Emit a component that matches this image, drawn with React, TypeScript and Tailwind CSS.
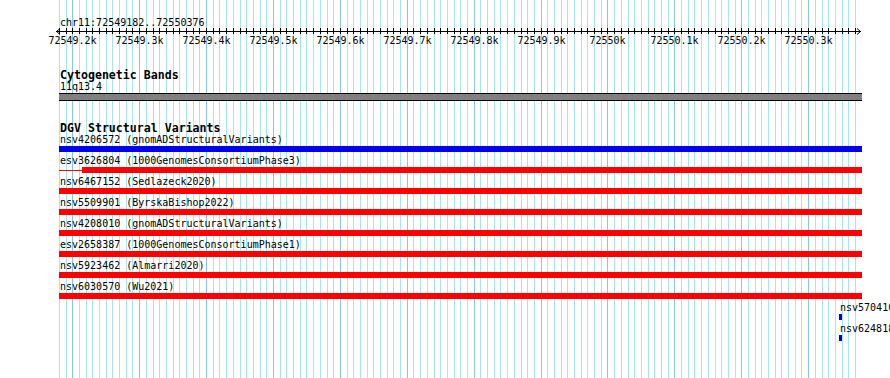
import React from "react";

const PX_PER_10BP = 6.69;
const GRID_LEFT = 58.9;
const GRID_COUNT = 120;

const majorLabels = [
  "72549.2k",
  "72549.3k",
  "72549.4k",
  "72549.5k",
  "72549.6k",
  "72549.7k",
  "72549.8k",
  "72549.9k",
  "72550k",
  "72550.1k",
  "72550.2k",
  "72550.3k",
];

const variants = [
  { label: "nsv4206572 (gnomADStructuralVariants)", bar: "bg-[#0000ee]" },
  { label: "esv3626804 (1000GenomesConsortiumPhase3)", bar: "bg-[#ff0000]", startsAt: 23 },
  { label: "nsv6467152 (Sedlazeck2020)", bar: "bg-[#ff0000]" },
  { label: "nsv5509901 (ByrskaBishop2022)", bar: "bg-[#ff0000]" },
  { label: "nsv4208010 (gnomADStructuralVariants)", bar: "bg-[#ff0000]" },
  { label: "esv2658387 (1000GenomesConsortiumPhase1)", bar: "bg-[#ff0000]" },
  { label: "nsv5923462 (Almarri2020)", bar: "bg-[#ff0000]" },
  { label: "nsv6030570 (Wu2021)", bar: "bg-[#ff0000]" },
];

// these two sit at the right edge of the view and run off it
const tinyVariants = [
  "nsv5704100 (gnomADStructuralVariants)",
  "nsv6248181 (Collins2017)",
];

function lineX(k: number) {
  return Math.round(GRID_LEFT + k * PX_PER_10BP) + 0.5;
}

function GridLines() {
  return (
    <svg className="absolute inset-0 pointer-events-none" width={890} height={378}>
      {Array.from({ length: GRID_COUNT }).map((_, k) => (
        <line
          key={k}
          x1={lineX(k)}
          x2={lineX(k)}
          y1={0}
          y2={378}
          stroke={(k - 2) % 10 === 0 ? "#86c6ec" : "#a8e6ee"}
          strokeWidth={1}
        />
      ))}
    </svg>
  );
}

function Ruler() {
  return (
    <svg width={890} height={22} className="block">
      <line x1={56} x2={861} y1={5.5} y2={5.5} stroke="#000" />
      <polyline points="60,2.5 56.5,5.5 60,8.5" fill="none" stroke="#000" />
      <polyline points="857,2.5 860.5,5.5 857,8.5" fill="none" stroke="#000" />
      {Array.from({ length: GRID_COUNT }).map((_, k) => (
        <line key={k} x1={lineX(k)} x2={lineX(k)} y1={2} y2={8} stroke="#000" />
      ))}
      {majorLabels.map((t, i) => (
        <text
          key={t}
          x={lineX(2 + i * 10)}
          y={18}
          textAnchor="middle"
          fontSize={10}
          fontFamily="'DejaVu Sans Mono', 'Liberation Mono', monospace"
          fill="#000"
        >
          {t}
        </text>
      ))}
    </svg>
  );
}

export default function App() {
  return (
    <div className="relative w-[890px] h-[378px] overflow-hidden bg-white text-black font-['DejaVu_Sans_Mono','Liberation_Mono',monospace]">
      <GridLines />
      <div className="relative flex flex-col">
        {/* location + ruler */}
        <div className="pl-[60px] pt-[17px] text-[10px] leading-[12px] whitespace-nowrap">
          chr11:72549182..72550376
        </div>
        <div className="-mt-[3px]">
          <Ruler />
        </div>

        {/* cytogenetic bands */}
        <div className="pl-[60px] mt-[21px] text-[11.6px] leading-[12px] mb-px font-bold whitespace-nowrap">
          Cytogenetic Bands
        </div>
        <div className="pl-[60px] text-[10px] leading-[10px] mb-px whitespace-nowrap">11q13.4</div>
        <div className="ml-[59px] w-[803px] h-[8px] border-y border-black bg-[#808080]" />

        {/* DGV variants */}
        <div className="pl-[60px] mt-[21px] text-[11.6px] leading-[12px] mb-px font-bold whitespace-nowrap">
          DGV Structural Variants
        </div>
        <div className="flex flex-col gap-[4px] ml-[59px] w-[803px]">
          {variants.map((v) => (
            <div key={v.label} className="flex flex-col">
              <div className="pl-px text-[10px] leading-[9px] mb-[2px] whitespace-nowrap">{v.label}</div>
              {v.startsAt ? (
                <div className="flex items-center h-[6px]">
                  <div className="w-[23px] h-px bg-[#ff0000]" />
                  <div className={`flex-1 h-[6px] ${v.bar}`} />
                </div>
              ) : (
                <div className={`h-[6px] ${v.bar}`} />
              )}
            </div>
          ))}
          {tinyVariants.map((t) => (
            <div key={t} className="flex flex-col ml-[780px] w-[51px] overflow-hidden">
              <div className="pl-px text-[10px] leading-[9px] mb-[2px] whitespace-nowrap">{t}</div>
              <div className="w-[3px] h-[6px] bg-[#0000ee]" />
            </div>
          ))}
        </div>
      </div>
    </div>
  );
}
